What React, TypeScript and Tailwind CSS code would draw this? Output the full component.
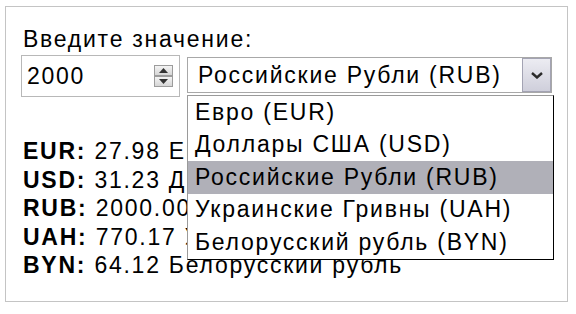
import { useState } from 'react';

const currencies = [
  { code: 'EUR', name: 'Евро', value: '27.98' },
  { code: 'USD', name: 'Доллары США', value: '31.23' },
  { code: 'RUB', name: 'Российские Рубли', value: '2000.00' },
  { code: 'UAH', name: 'Украинские Гривны', value: '770.17' },
  { code: 'BYN', name: 'Белорусский рубль', value: '64.12' },
];

const SpinButton = ({ up }: { up?: boolean }) => (
  <div className="flex-1 flex items-center justify-center border border-[#9c9c9c] bg-gradient-to-b from-[#f4f4f4] to-[#d6d6d6]">
    <svg width="9" height="5" viewBox="0 0 9 5">
      {up ? <polygon points="0,5 9,5 4.5,0" fill="#333" /> : <polygon points="0,0 9,0 4.5,5" fill="#333" />}
    </svg>
  </div>
);

const App = () => {
  const [amount] = useState('2000');
  const [selected] = useState('RUB');
  const current = currencies.find((c) => c.code === selected)!;

  return (
    <div className="w-[576px] h-[314px] bg-white pt-[6px] pl-[5px] text-black text-[23px] tracking-[1.75px] font-['Liberation_Sans',Arial,sans-serif]">
      <div className="w-[563px] h-[296px] border border-[#c4c4c4] pl-[15px] pt-[18px]">
        <div className="pl-[2px] leading-[28px]">Введите значение:</div>

        <div className="mt-[2px] flex items-start">
          {/* Number input */}
          <div className="w-[159px] h-[42px] border border-[#b8b8b8] flex items-center justify-between pl-[5px] pr-[6px]">
            <span className="leading-none">{amount}</span>
            <div className="w-[19px] h-[22px] flex flex-col">
              <SpinButton up />
              <SpinButton />
            </div>
          </div>

          {/* Select */}
          <div className="relative ml-[7px] mt-[2px] w-[365px] h-[36px] border border-[#a8a8a8] flex items-stretch">
            <div className="flex-1 flex items-center pl-[10px] leading-none">
              {current.name} ({current.code})
            </div>
            <div className="w-[29px] flex items-center justify-center border border-[#a3a3b3] bg-gradient-to-b from-[#ececf2] to-[#cfcfdb]">
              <svg width="12" height="7" viewBox="0 0 12 7">
                <polyline points="1,1 6,5.5 11,1" fill="none" stroke="#2b2b2b" strokeWidth="2.4" />
              </svg>
            </div>

            {/* Opened list */}
            <div className="absolute left-[-1px] top-[calc(100%+3px)] w-[367px] bg-white border border-black border-l-[#9a9a9a] border-t-[#9a9a9a]">
              {currencies.map((c) => (
                <div
                  key={c.code}
                  className={`h-[32.5px] flex items-center pl-[7px] leading-none ${c.code === selected ? 'bg-[#b0b0b8]' : ''}`}
                >
                  {c.name} ({c.code})
                </div>
              ))}
            </div>
          </div>
        </div>

        {/* Results */}
        <div className="mt-[40px] pl-[2px] leading-[28.5px]">
          {currencies.map((c) => (
            <div key={c.code} className="whitespace-nowrap">
              <b>{c.code}:</b> {c.value} {c.name}
            </div>
          ))}
        </div>
      </div>
    </div>
  );
};

export default App;
